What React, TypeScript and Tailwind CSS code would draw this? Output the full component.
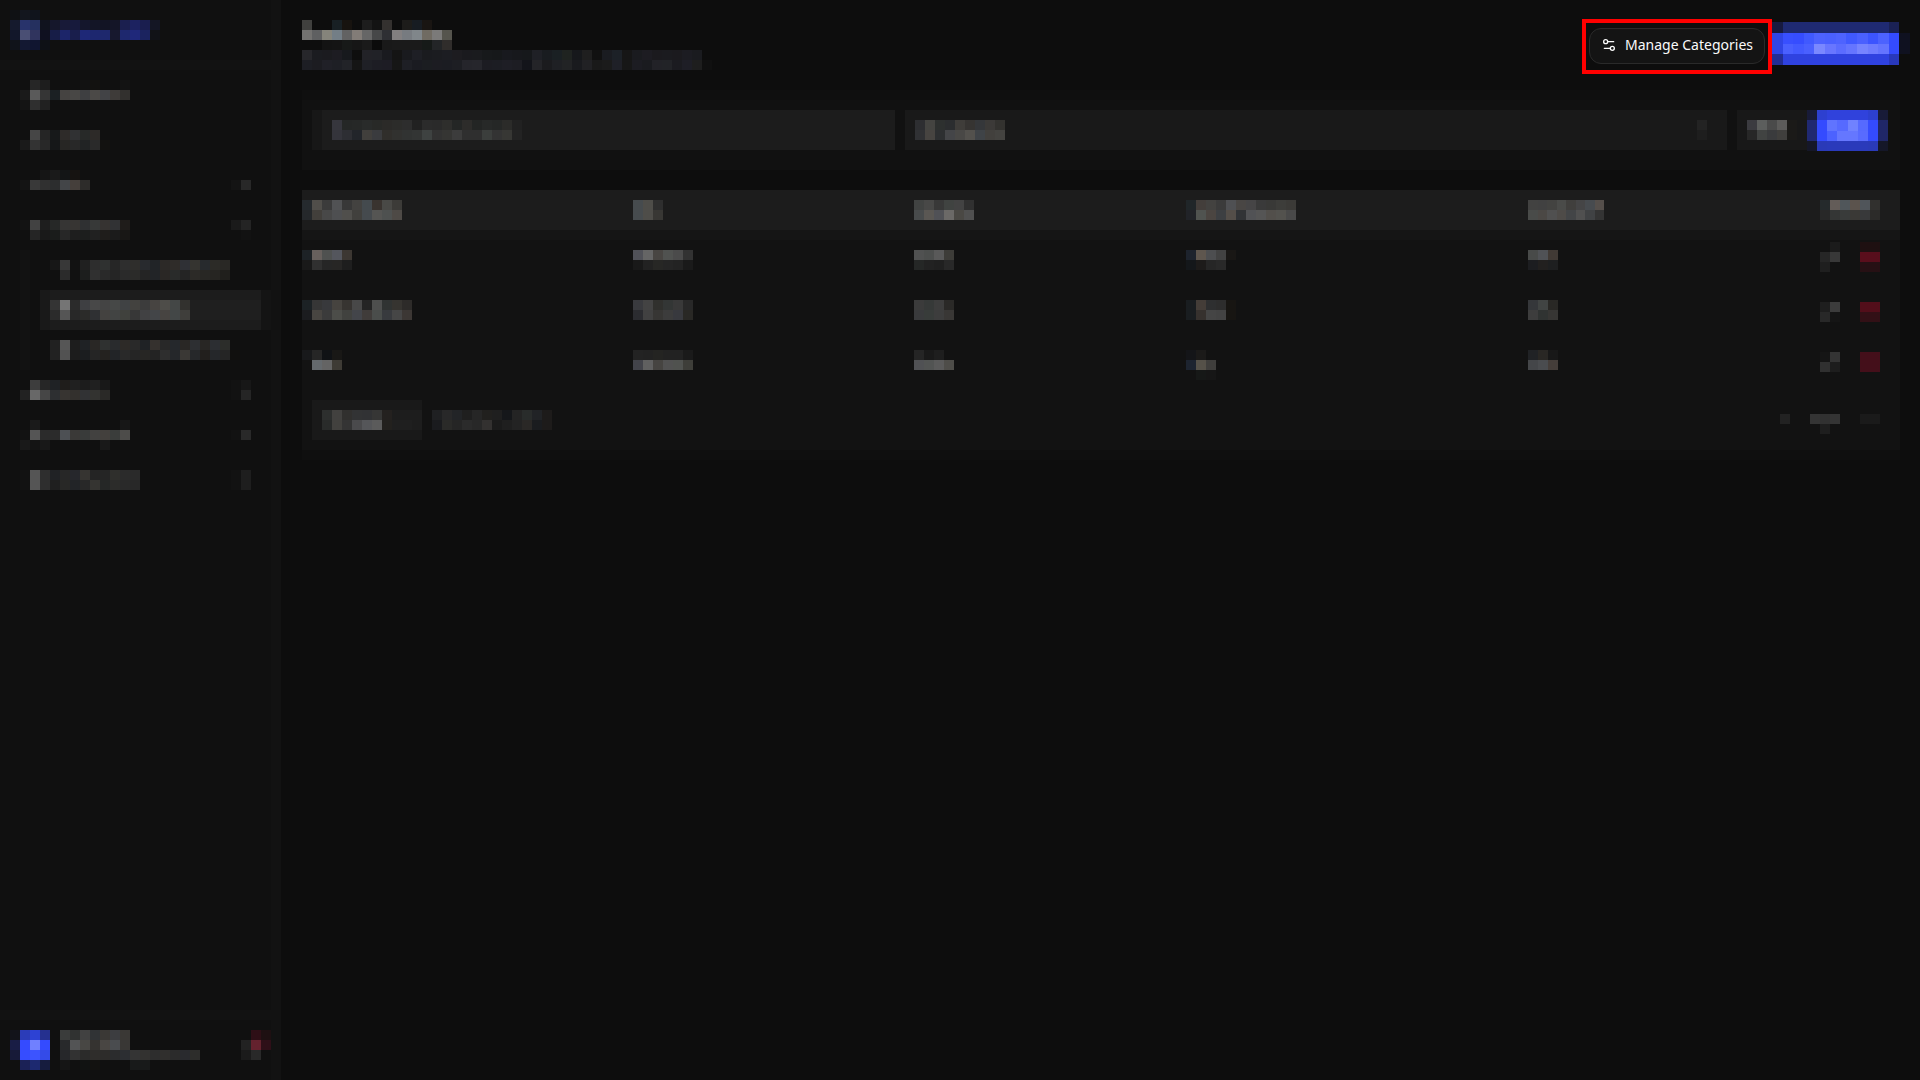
import type { ReactNode } from "react";

/**
 * Rows of colour cells: two digits are a grey level, six a full colour,
 * and "--" leaves the cell empty.
 */
function Mosaic({ rows, className = "" }: { rows: string[]; className?: string }) {
  const cells = rows.map((row) => row.split(" "));
  const columns = Math.max(...cells.map((row) => row.length));
  return (
    <svg
      aria-hidden="true"
      className={`block shrink-0 ${className}`}
      width={columns * 10}
      height={rows.length * 10}
      viewBox={`0 0 ${columns} ${rows.length}`}
      preserveAspectRatio="none"
      shapeRendering="crispEdges"
    >
      {cells.map((row, y) =>
        row.map((cell, x) =>
          cell === "--" ? null : (
            <rect key={`${x}-${y}`} x={x} y={y} width={1} height={1} fill={`#${cell.length === 2 ? cell.repeat(3) : cell}`} />
          ),
        ),
      )}
    </svg>
  );
}

const logo = [
  "0f1114 13161e 10141c -- -- -- -- -- -- -- -- -- -- -- --",
  "151a2d 28336b 25305f 10131e 15172b 181a38 171a3c 14162c 131526 121424 141527 1b1f4f 1c2260 1a1e4f 141624",
  "12172a 4a4f74 30345e 0f1020 171d47 1c2569 191e4c 1e2877 1d276f 1e286d 17182e 1e286e 1f287a 1b235f 111217",
  "10131a 131832 101530 0e1116 -- -- -- -- -- -- -- -- -- -- --",
];

const primaryItems = [
  {
    rows: [
      "-- 26 1d -- -- -- 12 131210 -- -- 13",
      "1a 5a 35 1b2023 454341 484745 3e3f41 4b4947 424346 3e3b39 32302e",
      "14 2f 21",
    ],
    height: "h-10",
  },
  { rows: ["--", "-- 46 25 17191a 2e2b29 303133 272928 2d2a28", "1a 33 28 151718 272624 28 212324 2a 131210"], height: "h-10" },
  { rows: ["--", "-- -- 15 1a 131516 161311", "14 39 30 2c2d2e 434548 453f3b 2d2c2a"], toggle: ["--", "--", "14 28"], height: "h-[50px]" },
  {
    rows: ["--", "13 42 1e 262827 363534 373533 2f3032 373938 363331 313234 1f1c1a", "-- 25 19 1a1c1b 27 1e 1c1e1d 21 1f1d1b 1b 181715"],
    toggle: ["--", "1a 24", "-- 12"],
    height: "h-10",
  },
];

const subItems = [
  [
    "17 38 12 20 2d 2f3130 26 2e 2f2e2c 282a2e 212427 2c2927 2f2c29 2f3035 353430 272a2d 2c2b27 292825",
    "-- 2b 11 1c1e1d 30 29 25 2a 2b2b29 24 222427 2a2725 292b2a 24 2c2a27 282724 262522 201f1c",
  ],
  [
    "34 75 2b 3e3f42 48 44 464847 404244 43423f 3c 474441 4e4d49 444746 32312e",
    "2b 55 28 2b2b29 2f3033 444240 424443 40413d 37 414143 434548 474441 434747 3f3e3b",
  ],
  [
    "21 56 1d 1f2225 292725 2f3130 292b2d 2d2a27 29 1f2225 35312e 28 25282c 292725 2d2f32 282624 2c2e32 2c2d2a",
    "22 52 1c 1b1d1f 25 24221f 222427 29 25 272624 23 2e 25272a 3a3835 26282a 221f1d 25272a 25 11100e",
  ],
];

const secondaryItems = [
  {
    rows: ["--", "-- 3d 26 1f2225 1f1d1b 20 1c 20 18", "22 68 46 2d2f31 373431 33302d 313234 333330 2a2927"],
    toggle: ["--", "12 17", "12 25"],
    height: "h-10",
  },
  {
    rows: ["--", "-- 1a -- -- -- -- -- -- -- -- 17", "12 55 2b 2b 4d5054 3a3937 393b3a 424140 43403d 3a3d3b 4d4c4a", "19 14 18 -- -- -- -- -- 19"],
    toggle: ["--", "--", "12 29"],
    height: "h-[50px]",
  },
  {
    rows: ["--", "12 55 2e 202225 27 26272c 363431 24 25 2f2f2c 2b 2a", "12 55 2e 1f 282826 222427 28 353431 252726 2c2c2a 29 28"],
    toggle: ["--", "12 1e", "12 1e"],
    height: "h-10",
  },
];

const title = [
  "40403e -- -- 182024 17130f -- 1d 13 34312f -- 1d1c1a 171c22 191512 --",
  "737270 5f6061 85847b 737e86 626262 827c77 666666 464748 2e2f33 827f80 777b80 80868a 706b62 7b7a79 55544d",
  "-- -- 13 14 171918 16 1a 0b 19 1a 1a 1a 161a18 232527 302d2b",
];

const description = [
  "27272b 1b1c20 1b1b1f 1d1c22 17191d 0e 222227 212227 191a1f 14 191a1e 1e1f25 1a1b1f 1b1c20 1c1d22 1d1c20 1a1a1e 1a1b1e 17191b 16181a 18191e 17181c 16181b 1f2026 191c20 1a2023 1f2320 16181b 1f 11 1a1c21 1c2127 16 1a1b1f 1d1c22 1b1a1e 1b1b1f 1b1a1e 1c1c22 1a1b1f",
  "1d1e24 1c1c21 202027 1e1f25 222328 15 1f2026 1d1d24 1d1c24 16 1e1f25 1a1b21 1b1d21 1c1c22 1b1c22 1d1e23 25252b 26262c 1c1c22 1c1d23 1e1e25 1d1d23 13141a 242428 1b1b1e 1f2024 222325 191a1e 212124 19 1b 1f2027 17 1c1c22 1a1b1f 222227 222327 1b1b20 1e1e26 1e 10",
];

const searchHint = [
  "36363d 252726 262827 292b2a 282927 2b2a28 2c2c2a 2d 21 2b 2a 2e2e2c 242625 2d2c2a 232524 272928 252726 2b2b29 21",
  "34343b 2d2e33 22252a 413f3c 3a3b3e 302e2b 31312f 313332 333534 3e4241 32 353533 3c 2f 2f 3b3e3c 33 373734 23",
];

const selectValue = [
  "2d2e31 444441 2d302f 2b2d2f 3f3d3a 363432 35373a 3c3a38 33322f",
  "303134 474441 2d2f31 444548 494846 53514d 3f4347 42403d 444340",
];

const headings = [
  ["252a2e 504e4a 3b 515254 38 434240 444a4e 39332f 494946 3c3b38", "25282b 423f3b 48 4e4f51 504f4c 41403d 454a4e 555553 4e5150 4e4a46"],
  ["464b4e 4e4d49 2e", "464b4e 4e4d49 383734"],
  ["414342 484847 38 404341 43 30", "484b4c 5a5753 505156 6b6967 4a4844 50"],
  ["202629 433e3b 434240 3b 4f5053 494644 464546 3a 393937 3d3d3a 3b3a37", "212328 505350 4b4541 3d3f42 544e49 313336 515255 555555 524f4b 53524e 49"],
  ["424241 41 434341 4a4b49 403f3d 454546 474b4f 554f4b", "494b49 4b4845 50 4e4b48 434547 505050 404244 34"],
  ["252a2c 635c58 50565a 5b534d 50555a 31302e", "28 343635 393b3a 3a3936 38393a 2c2b29"],
];

const records = [
  {
    cells: [
      ["1d2226 67605d 4f5150 54565d 3c3732", "19 30 26 272625 1e"],
      ["505158 656565 484542 505250 4b 32", "19 22 272725 25 23 1a"],
      ["505151 4c4e4d 595959 3d3c38", "252726 22 20 28"],
      ["1d232d 5e564e 4d4e50 42 191715", "14171a 1d1b1a 26 29"],
      ["484a49 505256 413a35", "1c1d20 22201f 1e1f20"],
    ],
    edit: ["-- 1b", "26 38", "1f --"],
    remove: ["1e1011 1e1011", "5a0e1c 570e1c", "261014 261014"],
    height: "h-[50px]",
    actionsTop: "pt-0.5",
  },
  {
    cells: [
      ["1c2225 36 38393c 46433f 373431 48 24 4e4f4e 303332 363430 2d2b29", "1b1c1f 484541 3b 4c4d49 41423f 43454a 403c3a 4a4d4b 383a3e 46 3c3734"],
      ["393a3e 43 30302d 333635 39 28", "2b2c30 41 373634 3c 38393e 292825"],
      ["3b 363938 3d 2a2927", "393a3c 383c3a 3d 393735"],
      ["191d20 443d38 2e2f30 2d 171512", "191d20 36312e 45 43 171512"],
      ["35373a 414443 292825", "3d 303332 373634"],
    ],
    edit: ["1e 3c", "28 15"],
    remove: ["520e1a 520e1a", "321016 321016"],
    height: "h-[50px]",
    actionsTop: "pt-3",
  },
  {
    cells: [
      ["18191b 26 101215 191816", "13 64696d 646464 3e3b35"],
      ["23 22 242422 22 22 1a", "42434a 60 464441 51 50524f 3e3e39"],
      ["25 19 1e --", "505154 525453 5a 4e4d49"],
      ["141518 1b1a19 --", "1d2430 555149 3f3e3c", "-- 161817 16"],
      ["202225 292724 18", "444649 4a4c4f 453e3a"],
    ],
    edit: ["15 34", "30 1d"],
    remove: ["440f1a 440f1a", "440f1a 440f1a"],
    height: "h-[60px]",
    actionsTop: "pt-3",
  },
];

function NavButton({ item, index }: { item: { rows: string[]; toggle?: string[]; height: string }; index: number }) {
  return (
    <button type="button" aria-label={`Menu section ${index}`} className={`flex w-full items-start justify-between pl-5 pr-5 ${item.height}`}>
      <Mosaic rows={item.rows} />
      {item.toggle && <Mosaic rows={item.toggle} />}
    </button>
  );
}

function Sidebar() {
  return (
    <aside className="flex w-[281px] shrink-0 flex-col border-r-[10px] border-[#121212] bg-[#101010]">
      <div className="border-b-[10px] border-[#121212] pb-2.5 pl-2.5 pt-2.5">
        <a href="#" aria-label="Home" className="block">
          <Mosaic rows={logo} />
        </a>
      </div>
      <nav aria-label="Main" className="pt-2.5">
        {primaryItems.map((item, i) => (
          <NavButton key={i} item={item} index={i + 1} />
        ))}
        <div className="ml-5 flex flex-col border-l-[10px] border-[#121212]">
          <a href="#" aria-label="Submenu item 1" className="h-10 pl-5 pt-2.5">
            <Mosaic rows={subItems[0]} />
          </a>
          <a href="#" aria-label="Submenu item 2" aria-current="page" className="ml-2.5 h-10 border-x-[10px] border-l-[#191919] border-r-[#141414] bg-[#1c1c1c] py-2.5">
            <span className="block bg-[#1f1f1f]">
              <Mosaic rows={subItems[1]} />
            </span>
          </a>
          <a href="#" aria-label="Submenu item 3" className="h-10 pl-5 pt-2.5">
            <Mosaic rows={subItems[2]} />
          </a>
        </div>
        {secondaryItems.map((item, i) => (
          <NavButton key={i} item={item} index={i + 5} />
        ))}
      </nav>
      <div className="mt-auto flex items-start border-t-[10px] border-[#121212] pb-2.5 pl-2.5 pt-2.5">
        <Mosaic
          rows={["12131a 2b3cb8 2d42d4 25308f", "191d45 354bff 7080ff 344bff", "171a38 364dff 3c54ff 344be8", "-- 1b2156 1d2970 161c3e"]}
        />
        <div className="ml-2.5">
          <Mosaic rows={["3a3c3b 303231 41 303335 3a3835 3c3d40 3a3835", "28292b 535455 484744 353330 494643 4a4c4f 393735"]} />
          <Mosaic
            rows={[
              "26272a 32 2b2b2a 2f2d2b 2d2c2a 2b2c2d 2c2e32 34 333230 2d 302f2d 2b 292a2e 2d2d2b",
              "15 -- 111312 131210 -- -- -- 181a1a 181a1a",
            ]}
          />
        </div>
        <button type="button" aria-label="Sign out" className="ml-auto">
          <Mosaic rows={["-- 2e0f16 1e1012", "22 64222e 2e0f18", "1b 29 --"]} />
        </button>
      </div>
    </aside>
  );
}

function ManageIcon() {
  return (
    <svg aria-hidden="true" className="size-4" viewBox="0 0 24 24" fill="none" stroke="currentColor" strokeWidth="2" strokeLinecap="round" strokeLinejoin="round">
      <path d="M14 17H5" />
      <path d="M19 7h-9" />
      <circle cx="17" cy="17" r="3" />
      <circle cx="7" cy="7" r="3" />
    </svg>
  );
}

function Header() {
  return (
    <header className="flex items-start justify-between">
      <div className="pt-5">
        <h1 aria-label="Page title">
          <Mosaic rows={title} />
        </h1>
        <Mosaic rows={description} />
      </div>
      <div className="-mr-2.5 flex items-start pt-[19px]">
        <div className="border-4 border-[#ff0000] px-[3px] pb-1.5 pt-[5px]">
          <button
            type="button"
            className="flex h-9 items-center gap-2 whitespace-nowrap rounded-xl border border-[#2a2a2a] bg-[#141414] px-[11px] pb-0.5 font-['Noto_Sans',sans-serif] text-sm text-neutral-50"
          >
            <ManageIcon />
            Manage Categories
          </button>
        </div>
        <button type="button" aria-label="Add" className="mt-[3px]">
          <Mosaic
            className="h-[43px] w-[138px]"
            rows={[
              "171a40 1f2a72 1f2a72 1f2a72 1f2a72 1f2a72 1f2a72 1f2a72 1f2a72 1f2a72 1f2a72 1a2154 --",
              "3045e6 384fff 364dff 4059ff 4d62ff 4a60ff 4e63ff 4059ff 4a60ff 3c54ff 4c62ff 344bff 0f1120",
              "3045e6 4a60ff 435aff 4a60ff 7a88ff 6876ff 5b6cff 6575ff 7684ff 6e7cff 6474ff 344bff 0f1120",
              "232d94 2f42e0 2f42e0 2f42e0 2f42e0 2f42e0 2f42e0 2f42e0 2f42e0 2f42e0 2f42e0 2838bc --",
            ]}
          />
        </button>
      </div>
    </header>
  );
}

function Overlay({ children, className }: { children: ReactNode; className: string }) {
  return <span className={`pointer-events-none absolute top-2.5 ${className}`}>{children}</span>;
}

function Filters() {
  return (
    <form className="mt-4 flex items-center border-t-[10px] border-[#0f0f0f] bg-[#111111] pt-2.5 pb-5 pl-2.5 pr-3">
      <label className="relative block h-10 w-[583px] shrink">
        <input type="search" aria-label="Search" className="block h-10 w-full border-l-[10px] border-[#171717] bg-[#1c1c1c] outline-none" />
        <Overlay className="left-5">
          <Mosaic rows={searchHint} />
        </Overlay>
      </label>
      <label className="relative ml-2.5 block h-10 flex-1">
        <select aria-label="Filter" className="block h-10 w-full appearance-none bg-[#191919] outline-none" />
        <Overlay className="left-2.5">
          <Mosaic rows={selectValue} />
        </Overlay>
        <Overlay className="right-5">
          <Mosaic rows={["23", "1e"]} />
        </Overlay>
      </label>
      <button type="reset" aria-label="Reset" className="ml-2.5 h-10 bg-[#181818] px-2.5">
        <Mosaic rows={["3b3b40 5c5e5d 4a4a4a 5c5b5a 1b1a18", "27 414342 3a3b3d 403f3d 1b1a18"]} />
      </button>
      <button type="submit" aria-label="Apply" className="h-10">
        <Mosaic
          className="h-[41px] w-[81px]"
          rows={[
            "181b38 2d40d0 3042dc 3042dc 3042dc 3042dc 2d40d0 181b38",
            "202972 344bff 6074ff 566aff 7082ff 566aff 344bff 202768",
            "202972 344bff 4c62ff 6577ff 6577ff 586bff 344bff 202768",
            "151728 2a3ab8 2a3abb 2a3abb 2a3abb 2a3abb 2a3ab8 151728",
          ]}
        />
      </button>
    </form>
  );
}

function Records() {
  return (
    <section aria-label="Records" className="mt-5 border-b-[10px] border-[#0f0f0f] bg-[#121212]">
      <table className="w-full table-fixed border-collapse">
        <colgroup>
          <col className="w-[20.7%]" />
          <col className="w-[17.6%]" />
          <col className="w-[17%]" />
          <col className="w-[21.4%]" />
          <col className="w-[15%]" />
          <col />
        </colgroup>
        <thead>
          <tr className="h-10 bg-[#1c1c1c]">
            {headings.map((rows, i) => (
              <th key={i} scope="col" aria-label={`Column ${i + 1}`} className="p-0 last:pr-5">
                <div className={i === 5 ? "flex justify-end" : "flex"}>
                  <Mosaic rows={rows} className={i === 4 ? "w-[76px]" : ""} />
                </div>
              </th>
            ))}
          </tr>
          <tr aria-hidden="true" className="h-2.5 bg-[#151515]">
            <td colSpan={6} className="p-0" />
          </tr>
        </thead>
        <tbody>
          {records.map((record, r) => (
            <tr key={r} className={`align-top ${record.height}`}>
              {record.cells.map((rows, c) => (
                <td key={c} className="p-0 pt-2.5">
                  <Mosaic rows={rows} />
                </td>
              ))}
              <td className={`p-0 pr-5 ${record.actionsTop}`}>
                <div className="flex justify-end gap-5">
                  <button type="button" aria-label="Edit">
                    <Mosaic rows={record.edit} />
                  </button>
                  <button type="button" aria-label="Delete">
                    <Mosaic rows={record.remove} />
                  </button>
                </div>
              </td>
            </tr>
          ))}
        </tbody>
      </table>
      <footer className="flex h-[50px] items-start justify-between pl-2.5 pr-5">
        <div className="flex items-start">
          <label className="relative block h-10 w-[110px]">
            <select aria-label="Rows per page" className="block h-10 w-full appearance-none bg-[#191919] outline-none" />
            <Overlay className="left-2.5">
              <Mosaic rows={["2d2f2e 42413f 31302e 323334 313234 363635 24211f 1d 1d 1d", "292b2a 42413e 34 4a4a4c 555659 5b5b5b 23211e 1f 1f 1d"]} />
            </Overlay>
          </label>
          <Mosaic
            className="ml-2.5 mt-2.5"
            rows={["1f2022 282829 222427 1f 26 21201e 1f 15171a 24 292c2b 212326 1d1b1a", "1a1b1e 2a2a28 25 2b 28 333130 1b 1f 23 2a2826 1a1c1f 1d1b1a"]}
          />
        </div>
        <div className="flex gap-5 pt-3.5">
          <button type="button" aria-label="Previous page">
            <Mosaic rows={["22", "--"]} />
          </button>
          <Mosaic rows={["34 31 34", "-- 1e --"]} />
          <button type="button" aria-label="Next page">
            <Mosaic rows={["1a 1a", "--"]} />
          </button>
        </div>
      </footer>
    </section>
  );
}

export default function App() {
  return (
    <div className="flex min-h-screen bg-[#0d0d0d] font-['Noto_Sans',sans-serif]">
      <Sidebar />
      <main className="min-w-0 flex-1 pl-[21px] pr-5">
        <Header />
        <Filters />
        <Records />
      </main>
    </div>
  );
}
